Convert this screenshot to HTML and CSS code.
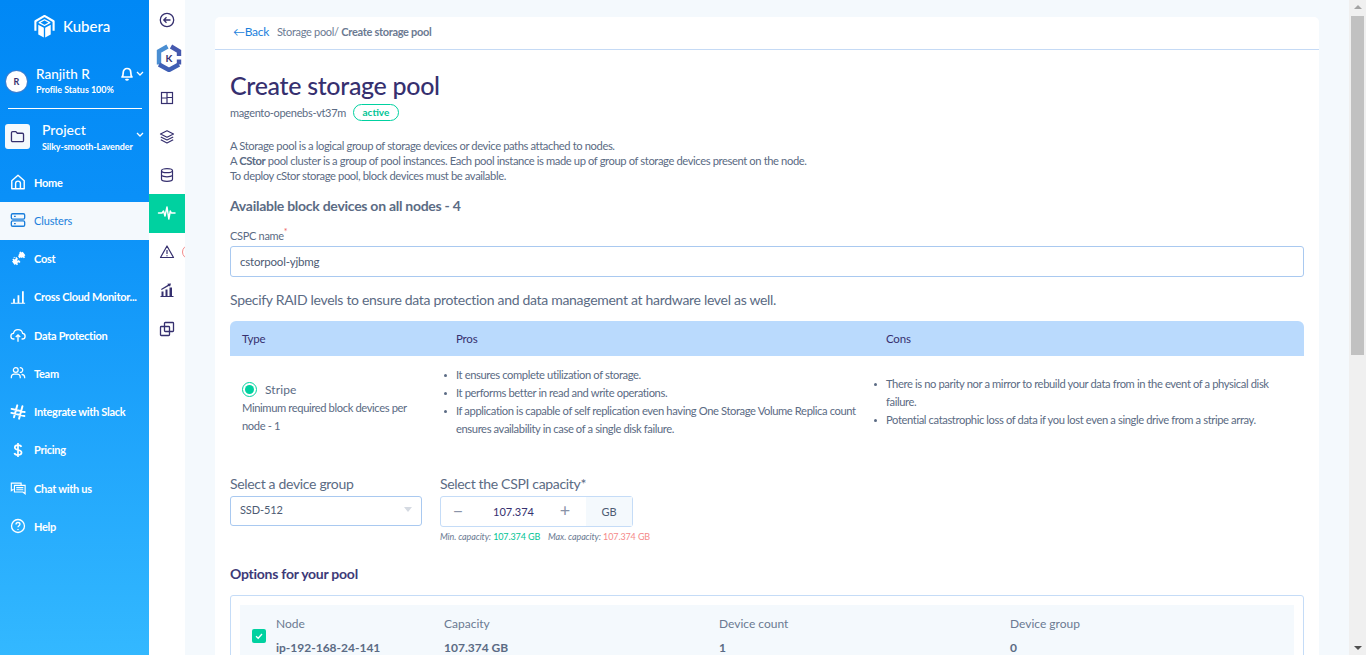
FILE: index.html
```html
<!DOCTYPE html>
<html lang="en">
<head>
<meta charset="utf-8">
<title>Create storage pool</title>
<link rel="stylesheet" href="styles.css">
</head>
<body>
<div class="shell">
  <aside class="sidebar">
    <div class="brand">
      <svg class="brand-logo" viewBox="0 0 24 26" fill="none"><path d="M2.500 17.500V7.500L12 2l9.500 5.500v10" stroke="#fff" stroke-width="2.200" stroke-linejoin="round"/><path d="M6.500 9 12 6l5.500 3L12 12z" stroke="#fff" stroke-width="1.300" stroke-linejoin="round"/><path d="M5.500 11.200 11.300 14.200V24.500L5.500 21.300z M18.500 11.200 12.700 14.200V24.500L18.500 21.300z" fill="#fff"/></svg>
      <span class="brand-name">Kubera</span>
    </div>
    <div class="user">
      <div class="avatar">R</div>
      <div class="user-text">
        <div class="user-name">Ranjith R</div>
        <div class="user-status">Profile Status 100%</div>
      </div>
      <div class="user-tools">
        <svg class="bell" viewBox="0 0 14 15" fill="none" stroke="#fff" stroke-width="1.700"><path d="M2 11c1-1 1.200-2 1.200-4.300C3.200 4.300 4.800 2.500 7 2.500s3.800 1.800 3.800 4.200c0 2.300.2 3.300 1.200 4.300z" stroke-linejoin="round"/><path d="M5.500 13.200c.8.800 2.200.8 3 0"/></svg>
        <svg class="chev" viewBox="0 0 8 5" fill="none" stroke="#fff" stroke-width="1.300"><path d="M1 1l3 3 3-3"/></svg>
      </div>
    </div>
    <div class="divider"></div>
    <div class="project">
      <div class="project-icon">
        <svg viewBox="0 0 16 14" fill="none" stroke="#36306f" stroke-width="1.400"><path d="M1.500 3c0-.8.500-1.300 1.300-1.300h3.400l1.600 1.800h5.400c.8 0 1.300.5 1.300 1.300v6.400c0 .8-.5 1.300-1.300 1.300H2.800c-.8 0-1.300-.5-1.300-1.300z" stroke-linejoin="round"/></svg>
      </div>
      <div class="project-text">
        <div class="project-name">Project</div>
        <div class="project-sub">Silky-smooth-Lavender</div>
      </div>
      <svg class="chev" viewBox="0 0 8 5" fill="none" stroke="#fff" stroke-width="1.300"><path d="M1 1l3 3 3-3"/></svg>
    </div>
    <nav class="nav">
      <a class="nav-item"><svg viewBox="0 0 18 18" fill="none" stroke="currentColor" stroke-width="1.600"><path d="M2 16.500V7.500L9 1.500l7 6v9z" stroke-linejoin="round"/><path d="M6.300 16.500v-6c0-1.500 1.100-2.500 2.700-2.500s2.700 1 2.700 2.500v6"/></svg><span>Home</span></a>
      <a class="nav-item is-active"><svg viewBox="0 0 18 18" fill="none" stroke="currentColor" stroke-width="1.500"><rect x="1.500" y="2" width="15" height="6" rx="1.500"/><rect x="1.500" y="10" width="15" height="6" rx="1.500"/><path d="M4.500 5h2M4.500 13h2"/></svg><span>Clusters</span></a>
      <a class="nav-item"><svg viewBox="0 0 18 18" fill="#fff"><path d="M10.500 1.500 12 .5l1 1.300 1.300-.9 3 3.900-1.300 1 1 1.300-1.500 1.100-1-1.300-1.500 1.100-.8-1-1.500 1.100-1.800-2.400 1.500-1.100-.8-1 1.400-1.100z"/><path d="M3.500 7.500 5 6.400l1 1.300 1.300-1 1.800 2.400-1.300 1 .8 1 1.400-1 1.800 2.400-1.500 1.100-.8-1-1.400 1 1 1.300-1.500 1.100-1-1.300-1.300 1-3-3.900 1.300-1-1-1.300 1.500-1.100 1 1.300 1.500-1.100-.8-1z"/></svg><span>Cost</span></a>
      <a class="nav-item"><svg viewBox="0 0 18 18" fill="#fff"><path d="M1 15.500h16v1.200H1z M3.500 11h2v4.500h-2z M8.500 7h2v8.500h-2z M13.500 2.500h2v13h-2z"/></svg><span>Cross Cloud Monitor...</span></a>
      <a class="nav-item"><svg viewBox="0 0 18 18" fill="none" stroke="#fff" stroke-width="1.500"><path d="M5 13.500H4.200C2.400 13.500 1 12.100 1 10.300c0-1.700 1.300-3 2.900-3.100C4.400 4.800 6.500 3 9 3s4.700 1.700 5.200 4.200c1.600.2 2.800 1.500 2.800 3.100 0 1.800-1.400 3.200-3.200 3.200H13"/><path d="M9 16.500V9M6.500 11.300 9 8.800l2.500 2.500"/></svg><span>Data Protection</span></a>
      <a class="nav-item"><svg viewBox="0 0 18 18" fill="none" stroke="#fff" stroke-width="1.400"><circle cx="6.500" cy="5.700" r="2.700"/><path d="M11 3.200a2.600 2.600 0 1 1 0 5"/><path d="M1.500 15v-1.500c0-2 1.500-3.300 3.500-3.300h3c2 0 3.500 1.300 3.500 3.300V15M13 10.500c2 .2 3.500 1.300 3.500 3.200V15"/></svg><span>Team</span></a>
      <a class="nav-item"><svg viewBox="0 0 18 18" fill="none" stroke="#fff" stroke-width="2.200" stroke-linecap="round"><path d="M8.200 1.500 4.500 15M14 2.500 10.200 16.500M1.800 5.500 16.500 9M1.500 10l14.700 3.500"/></svg><span>Integrate with Slack</span></a>
      <a class="nav-item"><svg viewBox="0 0 18 18" fill="none" stroke="#fff" stroke-width="1.900"><path d="M12.800 5.500C12.300 4 11 3.500 9 3.500c-2.200 0-3.600 1-3.600 2.700C5.400 10 13 8 13 11.900c0 1.700-1.600 2.700-4 2.700-2.200 0-3.600-.7-4.100-2.300M9 1v16"/></svg><span>Pricing</span></a>
      <a class="nav-item"><svg viewBox="0 0 18 18" fill="none" stroke="#fff" stroke-width="1.300"><path d="M4 10.500 1.500 12V3.500h11V6"/><path d="M5 6h12v7.500V15.500l-2.500-2H5z"/><path d="M7 8.500h8M7 11h8"/></svg><span>Chat with us</span></a>
      <a class="nav-item"><svg viewBox="0 0 18 18" fill="none" stroke="#fff" stroke-width="1.500"><circle cx="9" cy="9" r="7.300"/><path d="M6.800 7.200c0-1.300 1-2.100 2.200-2.100 1.300 0 2.200.8 2.200 1.900 0 1.700-2.200 1.700-2.200 3.500"/><path d="M9 12.300v1.300"/></svg><span>Help</span></a>
    </nav>
  </aside>
  <div class="rail">
    <div class="rail-top"><svg viewBox="0 0 16 16" fill="none" stroke="#36306f" stroke-width="1.300"><circle cx="8" cy="8" r="6.700"/><path d="M11.500 8H5M7.500 5.300 4.800 8l2.700 2.700"/></svg></div>
    <div class="rail-logo">
      <svg viewBox="0 0 26 28" fill="none" stroke-width="4.400"><path d="M11.500 2.500 3 7.300V20.500" stroke="#4a8ed2"/><path d="M3 20.500 13 26 23 20.500" stroke="#3f5fb5"/><path d="M15 2.500 23 7.300V12" stroke="#4559ae"/><path d="M23 15.500V20.500" stroke="#4559ae"/><text x="13" y="18" class="rail-k">K</text></svg>
    </div>
    <div class="rail-item"><svg viewBox="0 0 16 16" fill="none" stroke="#36306f" stroke-width="1.200"><rect x="2.500" y="2.500" width="11" height="11"/><path d="M8 2.500v11M8 7.500h5.500M2.500 8H8"/></svg></div>
    <div class="rail-item"><svg viewBox="0 0 16 16" fill="none" stroke="#36306f" stroke-width="1.200" stroke-linejoin="round"><path d="M8 1.800 14.500 5 8 8.200 1.500 5z"/><path d="M1.800 8 8 11l6.200-3M1.800 10.800 8 14l6.200-3.200"/></svg></div>
    <div class="rail-item"><svg viewBox="0 0 16 16" fill="none" stroke="#36306f" stroke-width="1.200"><ellipse cx="8" cy="3.700" rx="5.500" ry="2"/><path d="M2.500 3.700v8.600c0 1.100 2.500 2 5.500 2s5.500-.9 5.500-2V3.700M2.500 8.500c1 .9 3 1.300 5.500 1.300s4.500-.4 5.500-1.300"/></svg></div>
    <div class="rail-item is-active"><svg viewBox="0 0 20 16" fill="none" stroke="#fff" stroke-width="1.500" stroke-linecap="round" stroke-linejoin="round"><path d="M1.500 8h3.500l1.500-2 1.500 5 2-9 1.800 12 1.500-8 1 2h3.700"/></svg></div>
    <div class="rail-item"><svg viewBox="0 0 16 16" fill="none" stroke="#36306f" stroke-width="1.200" stroke-linejoin="round"><path d="M8 2 14.500 13.500h-13z"/><path d="M8 6v4M8 11.200v1"/></svg><span class="rail-badge"></span></div>
    <div class="rail-item"><svg viewBox="0 0 16 16" fill="#36306f"><path d="M1.500 14h13v1h-13z M2.500 9.500h2V14h-2z M6.500 7.500h2V14h-2z M10.500 5.500h2.500V14h-2.500z"/><path d="M2 7 9 2.800 8.300 1.800 12 1.500l-1 3.300-.8-1L2.600 8z"/></svg></div>
    <div class="rail-item"><svg viewBox="0 0 16 16" fill="none" stroke="#36306f" stroke-width="1.300"><rect x="1.500" y="5.500" width="9" height="9" rx=".8"/><rect x="5.500" y="1.500" width="9" height="9" rx=".8"/></svg></div>
  </div>
  <main class="main">
    <section class="card">
      <header class="crumbs">
        <a class="back">←Back</a>
        <span class="path">Storage pool/ <b>Create storage pool</b></span>
      </header>
      <div class="body">
        <h1 class="title">Create storage pool</h1>
        <div class="sub"><span>magento-openebs-vt37m</span><span class="pill">active</span></div>
        <p class="desc">A Storage pool is a logical group of storage devices or device paths attached to nodes.<br>A <b>CStor</b> pool cluster is a group of pool instances. Each pool instance is made up of group of storage devices present on the node.<br>To deploy cStor storage pool, block devices must be available.</p>
        <h2 class="avail">Available block devices on all nodes - 4</h2>
        <label class="cspc-label">CSPC name<sup>*</sup></label>
        <div class="cspc-input">cstorpool-yjbmg</div>
        <p class="raid">Specify RAID levels to ensure data protection and data management at hardware level as well.</p>
        <div class="raid-table">
          <div class="raid-head"><div>Type</div><div>Pros</div><div>Cons</div></div>
          <div class="raid-row">
            <div class="type-cell">
              <div class="radio-line"><span class="radio"></span><span>Stripe</span></div>
              <div>Minimum required block devices per node - 1</div>
            </div>
            <ul class="list">
              <li>It ensures complete utilization of storage.</li>
              <li>It performs better in read and write operations.</li>
              <li>If application is capable of self replication even having One Storage Volume Replica count ensures availability in case of a single disk failure.</li>
            </ul>
            <ul class="list">
              <li>There is no parity nor a mirror to rebuild your data from in the event of a physical disk failure.</li>
              <li>Potential catastrophic loss of data if you lost even a single drive from a stripe array.</li>
            </ul>
          </div>
        </div>
        <div class="selectors">
          <div class="sel-group">
            <div class="sel-label">Select a device group</div>
            <div class="select"><span>SSD-512</span><i class="caret"></i></div>
          </div>
          <div class="cap-group">
            <div class="sel-label">Select the CSPI capacity*</div>
            <div class="stepper">
              <span class="step">−</span><span class="val">107.374</span><span class="step step-plus">+</span><span class="unit">GB</span>
            </div>
            <div class="limits"><em>Min. capacity:</em> <span class="ok">107.374 GB</span><em class="gap">Max. capacity:</em> <span class="bad">107.374 GB</span></div>
          </div>
        </div>
        <h3 class="options">Options for your pool</h3>
        <div class="opt-box">
          <div class="opt-row">
            <span class="check"><svg viewBox="0 0 10 10" fill="none" stroke="#fff" stroke-width="1.300"><path d="M2 5.300 4.200 7.300 8 3"/></svg></span>
            <div class="opt-cols">
              <div class="opt-h">Node</div><div class="opt-h">Capacity</div><div class="opt-h">Device count</div><div class="opt-h">Device group</div>
              <div class="opt-v">ip-192-168-24-141</div><div class="opt-v">107.374 GB</div><div class="opt-v">1</div><div class="opt-v">0</div>
            </div>
          </div>
        </div>
      </div>
    </section>
  </main>
</div>
<div class="scrollbar">
  <i class="arrow arrow-up"></i>
  <div class="scroll-track"><div class="scroll-thumb"></div></div>
  <i class="arrow arrow-down"></i>
</div>
</body>
</html>
```
FILE: styles.css
```css
* { box-sizing: border-box; }
html { overflow-y: scroll; scrollbar-width: none; }
body { margin: 0; font-family: Lato, "Liberation Sans", sans-serif; background: #f4f9fd; color: #5b6b84; font-size: 12px; }
.shell { display: flex; min-height: 1200px; align-items: flex-start; }

.scrollbar { position: fixed; top: 0; right: 0; bottom: 0; width: 17px; background: #f0f0f0; display: flex; flex-direction: column; align-items: center; }
.arrow { flex: none; width: 0; height: 0; border: 4px solid transparent; }
.arrow-up { margin: 5px 0 7px; border-top: 0; border-bottom: 4px solid #a3a3a3; }
.arrow-down { margin: 7px 0 5px; border-bottom: 0; border-top: 4px solid #505050; }
.scroll-track { flex: 1; width: 100%; padding: 0 2px; }
.scroll-thumb { height: 339px; background: #c1c1c1; }

.sidebar { position: sticky; top: 0; flex: 0 0 149px; height: 100vh; overflow: hidden; background: linear-gradient(180deg, #0088f5 0%, #0a90f8 30%, #33b8ff 100%); color: #fff; }
.brand { display: flex; align-items: center; padding: 0 0 2px 33px; gap: 7px; height: 54px; }
.brand-logo { width: 23px; height: 25px; }
.brand-name { font-size: 15px; font-weight: 500; }
.user { display: flex; align-items: center; height: 54px; padding-left: 6px; }
.avatar { width: 21px; height: 21px; border-radius: 50%; background: #fff; color: #36306f; font-size: 9px; font-weight: 700; display: flex; align-items: center; justify-content: center; box-shadow: 0 0 0 1px #3c7fd0; }
.user-text { margin-left: 9px; flex: 1; }
.user-name { font-size: 13.500px; font-weight: 500; line-height: 16px; }
.user-status { font-size: 9px; font-weight: 700; line-height: 12px; margin-top: 2px; letter-spacing: -.05px; }
.user-tools { display: flex; align-items: center; align-self: flex-start; margin-top: 12px; }
.bell { width: 14px; height: 15px; }
.chev { width: 8px; height: 5px; margin: 0 5px 0 2px; }
.divider { height: 1px; background: #fff; margin: 0 7px 0 8px; }
.project { display: flex; align-items: center; height: 54px; padding-left: 5px; }
.project > .chev { margin-top: -3px; }
.project-icon { width: 25px; height: 25px; background: #f4f9fd; border-radius: 3px; display: flex; align-items: center; justify-content: center; }
.project-icon svg { width: 15px; height: 13px; }
.project-text { margin-left: 12px; flex: 1; padding-top: 2px; }
.project-name { font-size: 14px; font-weight: 500; line-height: 18px; }
.project-sub { font-size: 9px; font-weight: 700; line-height: 12px; letter-spacing: -.1px; margin-top: 2px; white-space: nowrap; }
.nav { display: flex; flex-direction: column; padding-top: 0.5px; }
.nav-item { display: flex; align-items: center; height: 38.250px; padding: 0 0 1px 10px; gap: 8px; font-size: 11px; font-weight: 700; letter-spacing: -.28px; white-space: nowrap; color: #fff; }
.nav-item svg { width: 16px; height: 16px; flex: none; }
.nav-item.is-active { background: #f4f9fd; color: #1b7fdc; font-weight: 400; letter-spacing: -.15px; }

.rail { position: sticky; top: 0; flex: 0 0 36px; height: 100vh; background: #fff; overflow: hidden; }
.rail-top { height: 38px; display: flex; align-items: center; justify-content: center; padding-top: 2px; }
.rail-top svg { width: 16px; height: 16px; }
.rail-logo { height: 40px; display: flex; align-items: center; justify-content: center; margin-bottom: 1px; padding-left: 4px; }
.rail-logo svg { width: 26px; height: 28px; }
.rail-k { font: 700 10px Lato, sans-serif; fill: #36306f; stroke: none; text-anchor: middle; }
.rail-item { position: relative; height: 38.400px; display: flex; align-items: center; justify-content: center; }
.rail-item svg { width: 16px; height: 16px; }
.rail-item.is-active { background: #00d1a0; }
.rail-item.is-active svg { width: 20px; height: 16px; }
.rail-badge { position: absolute; left: 33px; top: 12px; width: 14px; height: 14px; border: 1px solid #f28a8a; border-radius: 50%; }

.main { flex: 1; min-width: 0; padding: 17px 47px 30px 30px; }
.card { background: #fff; border-radius: 5px 5px 0 0; min-height: 1153px; }
.crumbs { height: 33px; border-bottom: 1px solid #c5daf5; display: flex; align-items: center; padding: 0 18px 4px; }
.back { color: #1b7fdc; font-size: 12px; margin-right: 8px; letter-spacing: -.3px; }
.path { color: #6b7a92; font-size: 11px; letter-spacing: -.3px; }
.path b { font-weight: 700; }
.body { padding: 0 15px; }
.title { margin: 18px 0 0; font-size: 25px; font-weight: 500; line-height: 34px; color: #36306f; letter-spacing: -.32px; }
.sub { display: flex; align-items: center; gap: 7px; margin-top: -1px; height: 22px; font-size: 11px; letter-spacing: -.33px; color: #5b6b84; }
.pill { border: 1px solid #00d1a0; color: #00c495; font-size: 10px; font-weight: 700; letter-spacing: 0; border-radius: 9px; height: 17px; width: 46px; display: flex; align-items: center; justify-content: center; }
.desc { margin: 15px 0 0; font-size: 11.200px; line-height: 15px; letter-spacing: -.39px; color: #5b6b84; }
.avail { margin: 14px 0 0; font-size: 14px; font-weight: 700; line-height: 18px; letter-spacing: -.27px; color: #5b6b84; }
.cspc-label { display: block; margin-top: 13px; font-size: 11px; line-height: 15px; letter-spacing: -.3px; color: #5b6b84; }
.cspc-label sup { color: #e66; font-size: 9px; line-height: 0; }
.cspc-input { margin-top: 3px; height: 31px; border: 1px solid #a9c9f0; border-radius: 3px; padding: 0 9px 1px; display: flex; align-items: center; font-size: 11.500px; letter-spacing: -.2px; color: #4d5b73; }
.raid { margin: 13px 0 0; font-size: 14px; line-height: 20px; letter-spacing: -.3px; color: #5b6b84; }
.raid-table { margin-top: 11px; }
.raid-head, .raid-row { display: grid; grid-template-columns: 214px 430px 430px; }
.raid-head { height: 35px; align-items: center; background: #badafd; border-radius: 6px 6px 0 0; color: #36306f; font-size: 11.500px; letter-spacing: -.2px; }
.raid-head > div { padding-left: 12px; }
.raid-row { height: 92px; align-items: center; font-size: 11.200px; line-height: 18px; letter-spacing: -.39px; color: #5b6b84; }
.type-cell { padding: 11px 20px 0 12px; }
.radio-line { display: flex; align-items: center; gap: 8px; font-size: 12px; letter-spacing: .1px; }
.radio { width: 15px; height: 15px; border: 1px solid #00d1a0; border-radius: 50%; display: flex; align-items: center; justify-content: center; }
.radio::after { content: ""; width: 9px; height: 9px; border-radius: 50%; background: #00d1a0; }
.list { margin: 0; padding: 0 12px; list-style: none; }
.list li { position: relative; }
.list li::before { content: ""; position: absolute; left: -12px; top: 8px; width: 3px; height: 3px; border-radius: 50%; background: #5b6b84; }
.selectors { display: flex; gap: 18px; margin-top: 27px; }
.sel-group { width: 192px; }
.sel-label { font-size: 14px; line-height: 18px; letter-spacing: -.33px; color: #5b6b84; }
.select { margin-top: 3px; height: 30px; border: 1px solid #a9c9f0; border-radius: 3px; padding: 0 9px 3px; display: flex; align-items: center; justify-content: space-between; font-size: 11px; letter-spacing: -.1px; color: #4d5b73; }
.caret { width: 0; height: 0; border: 4px solid transparent; border-top: 5px solid #d5dae2; border-bottom: 0; }
.stepper { margin-top: 3px; width: 193px; height: 31px; border: 1px solid #c5dcf7; border-radius: 3px; display: grid; grid-template-columns: 34px 1fr 34px 46px; align-items: center; text-align: center; font-size: 11px; color: #36306f; }
.step { font-size: 18px; color: #8a93a8; line-height: 1; padding-bottom: 3px; }
.step-plus { margin-right: 8px; }
.val { padding-bottom: 1px; }
.unit { height: 100%; background: #f4f9fd; display: flex; align-items: center; justify-content: center; padding-bottom: 1px; font-size: 11px; color: #4d5b73; }
.limits { margin-top: 4px; font-size: 9px; line-height: 11px; letter-spacing: -.12px; color: #6b7a92; white-space: nowrap; }
.limits .gap { margin-left: 8px; }
.ok { color: #00c495; }
.bad { color: #f58a8a; }
.options { margin: 23px 0 0; font-size: 14px; font-weight: 700; line-height: 18px; letter-spacing: -.25px; color: #3d3a78; }
.opt-box { margin-top: 12px; border: 1px solid #c5dcf7; border-radius: 3px; padding: 9px; }
.opt-row { display: flex; align-items: center; background: #f4f9fd; padding: 0 12px; height: 62px; }
.check { width: 14px; height: 14px; background: #00d1a0; border-radius: 2px; display: flex; flex: none; align-items: center; justify-content: center; }
.check svg { width: 10px; height: 10px; }
.opt-cols { margin-left: 10px; display: grid; grid-template-columns: 168px 275px 291px 200px; row-gap: 8px; line-height: 16px; font-size: 12px; }
.opt-h { color: #6b7a92; }
.opt-v { font-weight: 700; color: #5b6b84; }
```
